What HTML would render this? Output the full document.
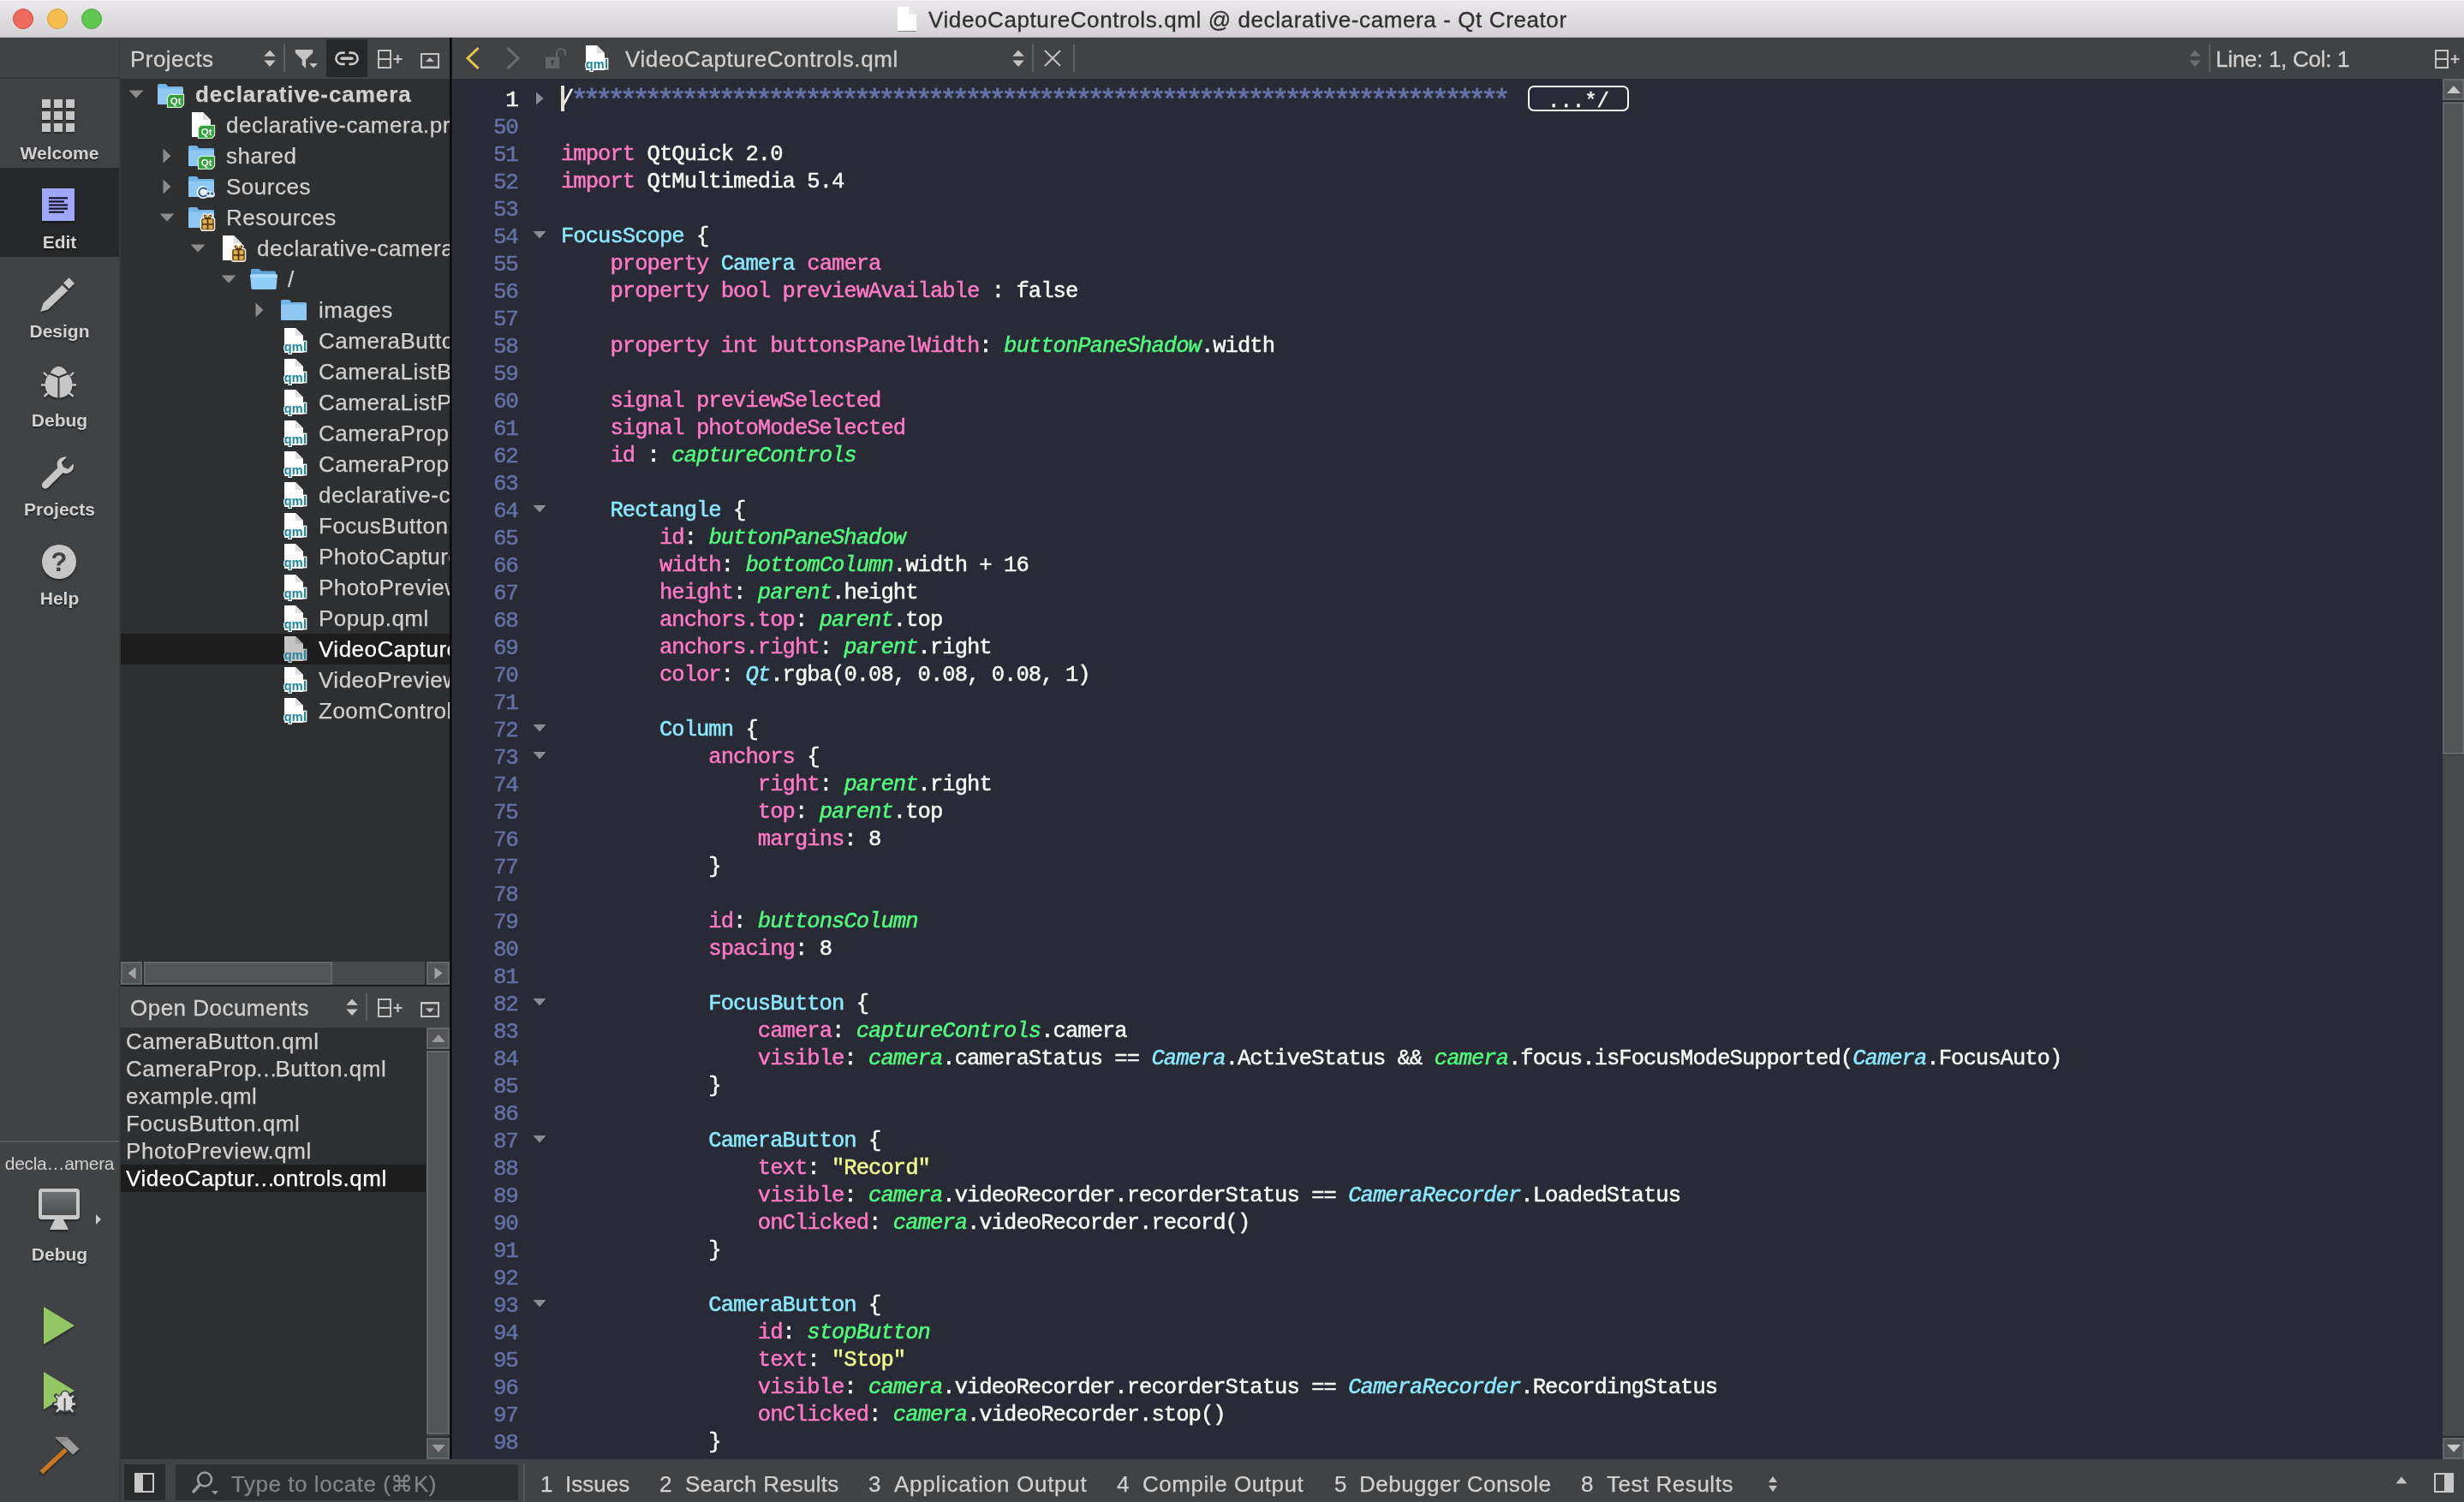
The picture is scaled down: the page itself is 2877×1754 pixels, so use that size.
<!DOCTYPE html>
<html lang="en"><head><meta charset="utf-8"><title>VideoCaptureControls.qml @ declarative-camera - Qt Creator</title>
<style>
*{box-sizing:border-box;margin:0;padding:0}
html,body{width:2877px;height:1754px;overflow:hidden;background:#404244}
body{will-change:transform;font-family:"Liberation Sans",sans-serif;font-size:26px;color:#d0d0d0;position:relative}
.abs{position:absolute}
#title{left:0;top:0;width:2877px;height:44px;background:linear-gradient(#ebe9eb,#d3d1d3);border-bottom:1px solid #b1afb1;box-shadow:inset 0 1px 0 #f4f3f4}
#title .tl{position:absolute;top:10px;width:24px;height:24px;border-radius:50%}
#title .txt{position:absolute;left:1084px;top:0;height:44px;line-height:46px;color:#2f2f2f;font-size:26px;white-space:nowrap;letter-spacing:.6px;-webkit-text-stroke:.3px #2f2f2f}
#side{left:0;top:44px;width:141px;height:1710px;background:#404244}
.mode{position:absolute;left:0;width:139px;height:104px}
.mode.sel{background:#262728}
.mode .lbl{position:absolute;left:0;width:139px;top:73px;text-align:center;font-weight:bold;font-size:21px;color:#d2d2d2;line-height:28px;letter-spacing:0;text-shadow:0 2px 2px rgba(0,0,0,.45)}
.mode svg{position:absolute}
#ptool,#etool,#otool{background:#404244}
.tree{background:#2e2f30}
.row{position:absolute;left:0;height:36px;line-height:36px;white-space:nowrap;font-size:26px;color:#d0d0d0}
.row .t{position:absolute;top:0;letter-spacing:.5px;-webkit-text-stroke:.25px currentColor}
.row svg{position:absolute}
.orow{position:absolute;left:0;width:357px;height:32px;line-height:32px;white-space:nowrap;font-size:26px;color:#d0d0d0;padding-left:7px;letter-spacing:.55px;-webkit-text-stroke:.25px currentColor}
.el{margin:0 -3px 0 -2px}
#editor{left:528px;top:92px;width:2324px;height:1612px;background:#282a36;overflow:hidden}
.ln{position:absolute;left:0;width:76.5px;text-align:right;height:32px;line-height:32px;color:#6272a4;font-family:"Liberation Mono",monospace;font-size:26px;letter-spacing:-1.4px;-webkit-text-stroke:.5px currentColor}
.cl{position:absolute;left:127px;height:32px;line-height:32px;white-space:pre;color:#f8f8f2;font-family:"Liberation Mono",monospace;font-size:25.5px;letter-spacing:-.94px;-webkit-text-stroke:.5px currentColor}
.st{display:inline-block;width:14.36px;font-size:34px;line-height:32px;vertical-align:top;position:relative;top:1px;left:-3px;-webkit-text-stroke:.9px currentColor}
.k{color:#ff79c6}.c{color:#8be9fd}.g{color:#50fa7b;font-style:italic}.ci{color:#8be9fd;font-style:italic}.s{color:#f1fa8c}.m{color:#6272a4}
.fold{position:absolute;left:94px}
#bottom{left:141px;top:1704px;width:2736px;height:50px;background:#404244}
#bottom>div.in{position:absolute;left:-1px;top:-1px;width:2737px;height:51px}
.bt{position:absolute;top:0;height:51px;line-height:60px;font-size:26px;color:#d0d0d0;white-space:nowrap;letter-spacing:.3px;-webkit-text-stroke:.25px currentColor}
</style></head>
<body>
<div id="title" class="abs">
<div class="tl" style="left:15px;background:#ee6a5e;border:1px solid #cf5046"></div>
<div class="tl" style="left:55px;background:#f5be4f;border:1px solid #d5a03c"></div>
<div class="tl" style="left:95px;background:#5fc650;border:1px solid #48a83b"></div>
<svg class="abs" style="left:1046px;top:7px" width="26" height="30" viewBox="0 0 26 30"><path d="M2 1h13l9 9v19H2z" fill="#ffffff" style="filter:drop-shadow(0 1px 0.6px rgba(0,0,0,.35))"/><path d="M15 1v9h9z" fill="#e9e9e9"/></svg>
<div class="txt">VideoCaptureControls.qml @ declarative-camera - Qt Creator</div>
</div>
<div id="side" class="abs">
<div class="mode" style="top:48px"><svg style="left:49px;top:24px;filter:drop-shadow(0 2px 1px rgba(0,0,0,.4))" width="38" height="38" fill="#c6c6c6"><rect x="0" y="0" width="10" height="10"/><rect x="14" y="0" width="10" height="10"/><rect x="28" y="0" width="10" height="10"/><rect x="0" y="14" width="10" height="10"/><rect x="14" y="14" width="10" height="10"/><rect x="28" y="14" width="10" height="10"/><rect x="0" y="28" width="10" height="10"/><rect x="14" y="28" width="10" height="10"/><rect x="28" y="28" width="10" height="10"/></svg><div class="lbl">Welcome</div></div>
<div class="mode sel" style="top:152px"><svg style="left:49px;top:24px;filter:drop-shadow(0 2px 1px rgba(0,0,0,.5))" width="38" height="38"><rect width="38" height="38" fill="#9fa7fb"/><rect x="8" y="10.2" width="22" height="2.2" fill="#15162a"/><rect x="8" y="14.3" width="18" height="2.2" fill="#15162a"/><rect x="8" y="18.4" width="22" height="2.2" fill="#15162a"/><rect x="8" y="22.5" width="22" height="2.2" fill="#15162a"/><rect x="8" y="26.6" width="18" height="2.2" fill="#15162a"/></svg><div class="lbl">Edit</div></div>
<div class="mode" style="top:256px"><svg style="left:45px;top:21px;filter:drop-shadow(0 2px 1px rgba(0,0,0,.4))" width="46" height="46" viewBox="0 0 46 46" fill="#c6c6c6"><path d="M2.3 42.9 L5.6 32.9 L27.6 12 L34.3 18.3 L11 40.5 Z"/><path d="M29 9.6 L35.6 3.2 L42 9.9 L35.6 16.3 Z"/></svg><div class="lbl">Design</div></div>
<div class="mode" style="top:360px"><svg style="left:46px;top:22px;filter:drop-shadow(0 2px 1px rgba(0,0,0,.4))" width="46" height="46" viewBox="0 0 46 46" fill="#c6c6c6" stroke="#c6c6c6"><path d="M13 9.5 C15 4 19.5 2 22.5 2 C25.5 2 30 4 32 9.5 L22.5 13.5 Z" stroke="none"/><path d="M21.5 15.2 L11.5 11.2 C8 14 6.5 19 6.5 23.5 C6.5 31 12 38 21.5 38.6 Z" stroke="none"/><path d="M23.5 15.2 L33.5 11.2 C37 14 38.5 19 38.5 23.5 C38.5 31 33 38 23.5 38.6 Z" stroke="none"/><g stroke-width="2.4" fill="none"><path d="M9 13 L5 9"/><path d="M36 13 L40 9"/><path d="M7 23.5 L2 23.5"/><path d="M38 23.5 L43 23.5"/><path d="M10 33 L5.5 37"/><path d="M35 33 L39.5 37"/></g></svg><div class="lbl">Debug</div></div>
<div class="mode" style="top:464px"><svg style="left:47px;top:24px;filter:drop-shadow(0 2px 1px rgba(0,0,0,.4))" width="42" height="42" viewBox="0 0 46 46" fill="#c6c6c6"><path d="M34 2 C28 0.5 21.5 4.5 21.5 11.5 C21.5 13 21.8 14.3 22.3 15.6 L3.6 34.3 C1.6 36.3 1.6 39.2 3.4 41 C5.2 42.8 8.1 42.8 10.1 40.8 L28.8 22.1 C30.1 22.6 31.4 22.9 32.9 22.9 C39.9 22.9 43.9 16.4 42.4 10.4 L35.6 17.2 L29.6 14.8 L27.2 8.8 Z"/></svg><div class="lbl">Projects</div></div>
<div class="mode" style="top:568px"><svg style="left:48px;top:23px;filter:drop-shadow(0 2px 1px rgba(0,0,0,.4))" width="42" height="42" viewBox="0 0 42 42"><circle cx="21" cy="21" r="20" fill="#c6c6c6"/><text x="21" y="31.5" text-anchor="middle" font-family="Liberation Sans, sans-serif" font-weight="bold" font-size="31" fill="#404244">?</text></svg><div class="lbl">Help</div></div>
<div class="abs" style="left:139px;top:0;width:2px;height:1710px;background:#37383a"></div>
<div class="abs" style="left:0;top:46px;width:139px;height:2px;background:#37383a"></div>
<div class="abs" style="left:0;top:1288px;width:139px;height:2px;background:#595b5d"></div>
<div class="abs" style="left:0;top:1300px;width:139px;text-align:center;font-size:21px;letter-spacing:-.3px;line-height:30px;color:#d0d0d0;white-space:nowrap">decla…amera</div>
<svg class="abs" style="left:43px;top:1342px;filter:drop-shadow(0 2px 1px rgba(0,0,0,.4))" width="52" height="52" viewBox="0 0 52 52"><defs><linearGradient id="scr" x1="0" y1="0" x2="0" y2="1"><stop offset="0" stop-color="#707173"/><stop offset="1" stop-color="#4c4d4f"/></linearGradient></defs><rect x="2" y="2" width="48" height="36" rx="4" fill="#c8c8c8"/><rect x="6" y="6" width="40" height="27" fill="url(#scr)"/><path d="M21 38 L31 38 L37 50 L15 50 Z" fill="#c8c8c8"/></svg>
<svg class="abs" style="left:111px;top:1373px" width="8" height="14"><path d="M1 1 L7 7 L1 13Z" fill="#c8c8c8"/></svg>
<div class="abs" style="left:0;top:1407px;width:139px;text-align:center;font-weight:bold;font-size:21px;line-height:28px;color:#d2d2d2;text-shadow:0 2px 2px rgba(0,0,0,.45)">Debug</div>
<svg class="abs" style="left:49px;top:1480px;filter:drop-shadow(0 2px 1px rgba(0,0,0,.4))" width="40" height="48" viewBox="0 0 40 48"><path d="M2 2 L38 24 L2 46 Z" fill="#93c763"/></svg>
<svg class="abs" style="left:49px;top:1556px;filter:drop-shadow(0 2px 1px rgba(0,0,0,.4))" width="44" height="52" viewBox="0 0 44 52"><path d="M2 2 L38 24 L2 46 Z" fill="#93c763"/><g stroke="#404244" stroke-width="3.2" fill="#404244" stroke-linejoin="round"><circle cx="27" cy="28.9" r="3.9"/><ellipse cx="26.6" cy="38.6" rx="9" ry="9.2"/><path d="M20 33.5 L16.5 30 M33.2 33.5 L36.7 30 M18.5 39.6 L14.3 39.6 M34.7 39.6 L39 39.6 M20.5 45 L17 48.5 M32.7 45 L36.2 48.5" stroke-width="5" stroke-linecap="round"/></g><g fill="#dadada"><circle cx="27" cy="28.9" r="3.9"/><path d="M25.7 30.6 L22 29.6 C19 31.5 17.6 35 17.6 38.8 C17.6 43.6 20.8 47.4 25.7 47.6 Z"/><path d="M27.5 30.6 L31.2 29.6 C34.2 31.5 35.6 35 35.6 38.8 C35.6 43.6 32.4 47.4 27.5 47.6 Z"/></g><path d="M20 33.5 L16.5 30 M33.2 33.5 L36.7 30 M18.5 39.6 L14.3 39.6 M34.7 39.6 L39 39.6 M20.5 45 L17 48.5 M32.7 45 L36.2 48.5" stroke="#dadada" stroke-width="2.2" fill="none"/></svg>
<svg class="abs" style="left:43px;top:1632px;filter:drop-shadow(0 2px 1px rgba(0,0,0,.45))" width="54" height="48" viewBox="0 0 54 48"><path d="M5.3 43.5 L34.1 16.8" stroke="#c8761f" stroke-width="5.2" fill="none"/><path d="M21.2 2.6 L35.1 2 L49.5 15.9 L42 22.8 Z" fill="#9c9c9c"/><path d="M21.2 2.6 L35.1 2 L38 4.8 L28.5 9.6 Z" fill="#8a8a8a"/></svg>
</div>
<div id="ptool" class="abs" style="left:140px;top:44px;width:385px;height:48px">
<div class="abs" style="left:12px;top:0;line-height:50px;font-size:26px;color:#d0d0d0;-webkit-text-stroke:.3px #d0d0d0;letter-spacing:.45px">Projects</div>
<svg class="abs" style="left:167px;top:12px" width="16" height="24"><path d="M8 2.5 L14.7 9.7 H1.3 Z" fill="#c4c4c4"/><path d="M8 21.9 L14.7 14.6 H1.3 Z" fill="#c4c4c4"/></svg>
<div class="abs" style="left:191px;top:8px;width:2px;height:32px;background:#5f6163"></div>
<svg class="abs" style="left:203px;top:12px" width="30" height="26" viewBox="0 0 30 26"><path d="M1.8 2 H22.2 V5.7 L14.1 13.7 V23.9 L9.8 19.7 V13.7 L1.8 5.7 Z" fill="#c4c4c4"/><path d="M18.2 18.1 H28 L23.1 23.3 Z" fill="#c4c4c4"/></svg>
<div class="abs" style="left:241px;top:2px;width:48px;height:44px;background:#262728"></div>
<svg class="abs" style="left:250px;top:14px" width="30" height="21" viewBox="0 0 30 21" fill="none" stroke="#c8c8c8" stroke-width="2.6"><path d="M12.7 3.6 H9 a6.65 6.65 0 0 0 0 13.3 H12.7"/><path d="M17.4 3.6 H21 a6.65 6.65 0 0 1 0 13.3 H17.4"/><path d="M9 10.25 H21" stroke-width="3.4" stroke-linecap="round"/></svg>
<svg class="abs" style="left:300px;top:13px" width="30" height="24" viewBox="0 0 30 24" fill="none" stroke="#c4c4c4" stroke-width="2"><rect x="2" y="2" width="14" height="20"/><path d="M2 12 H16"/><path d="M19.5 12 H29.5 M24.5 7 V17" stroke-width="2.2"/></svg>
<svg class="abs" style="left:350px;top:17px" width="24" height="20" viewBox="0 0 24 20"><rect x="2" y="2" width="20" height="16" fill="none" stroke="#c4c4c4" stroke-width="2"/><rect x="1" y="16.5" width="22" height="2.5" fill="#c4c4c4"/><path d="M7 11 H17 L12 6.3 Z" fill="#c4c4c4"/></svg>
</div>
<div class="abs tree" style="left:141px;top:92px;width:384px;height:1031px;overflow:hidden"><div class="abs" style="left:-1px;top:0;width:385px;height:1031px">
<div class="row" style="top:0px;width:385px;font-weight:bold;"><svg style="left:10px;top:13px" width="18" height="10"><path d="M0.5 0.5 H17.5 L9 9.5 Z" fill="#8c8c8c"/></svg><svg style="left:44px;top:2px" width="32" height="32" viewBox="0 0 32 32" ><path d="M0 5.5 Q0 4 1.5 4 H9 Q10 4 10.6 4.8 L12 7 H28.5 Q30 7 30 8.5 V26.5 Q30 28 28.5 28 H1.5 Q0 28 0 26.5 Z" fill="#72b5e6"/><path d="M0 9.5 H30 V26.5 Q30 28 28.5 28 H1.5 Q0 28 0 26.5 Z" fill="#8fc9f3"/><path d="M14.5 16.3 H30.5 V28 L27.5 31.3 H11.5 V19.6 Z" fill="#2fa03a" stroke="#cfe9d0" stroke-width="1.3"/><text x="21.2" y="28.3" text-anchor="middle" font-family="Liberation Sans, sans-serif" font-weight="bold" font-size="11.5" fill="#fff">Qt</text></svg><span class="t" style="left:88px;letter-spacing:.95px">declarative-camera</span></div>
<div class="row" style="top:36px;width:385px;"><svg style="left:80px;top:2px" width="32" height="32" viewBox="0 0 32 32" ><path d="M4 1 H17 L26 10 V30 H4 Z" fill="#fdfdfd"/><path d="M17 1 L26 10 H17 Z" fill="#dedede"/><path d="M14.5 16.3 H30.5 V28 L27.5 31.3 H11.5 V19.6 Z" fill="#2fa03a" stroke="#cfe9d0" stroke-width="1.3"/><text x="21.2" y="28.3" text-anchor="middle" font-family="Liberation Sans, sans-serif" font-weight="bold" font-size="11.5" fill="#fff">Qt</text></svg><span class="t" style="left:124px">declarative-camera.pro</span></div>
<div class="row" style="top:72px;width:385px;"><svg style="left:50px;top:9px" width="10" height="18"><path d="M0.5 0.5 V17.5 L9.5 9 Z" fill="#8c8c8c"/></svg><svg style="left:80px;top:2px" width="32" height="32" viewBox="0 0 32 32" ><path d="M0 5.5 Q0 4 1.5 4 H9 Q10 4 10.6 4.8 L12 7 H28.5 Q30 7 30 8.5 V26.5 Q30 28 28.5 28 H1.5 Q0 28 0 26.5 Z" fill="#72b5e6"/><path d="M0 9.5 H30 V26.5 Q30 28 28.5 28 H1.5 Q0 28 0 26.5 Z" fill="#8fc9f3"/><path d="M14.5 16.3 H30.5 V28 L27.5 31.3 H11.5 V19.6 Z" fill="#2fa03a" stroke="#cfe9d0" stroke-width="1.3"/><text x="21.2" y="28.3" text-anchor="middle" font-family="Liberation Sans, sans-serif" font-weight="bold" font-size="11.5" fill="#fff">Qt</text></svg><span class="t" style="left:124px">shared</span></div>
<div class="row" style="top:108px;width:385px;"><svg style="left:50px;top:9px" width="10" height="18"><path d="M0.5 0.5 V17.5 L9.5 9 Z" fill="#8c8c8c"/></svg><svg style="left:80px;top:2px" width="32" height="32" viewBox="0 0 32 32" ><path d="M0 5.5 Q0 4 1.5 4 H9 Q10 4 10.6 4.8 L12 7 H28.5 Q30 7 30 8.5 V26.5 Q30 28 28.5 28 H1.5 Q0 28 0 26.5 Z" fill="#72b5e6"/><path d="M0 9.5 H30 V26.5 Q30 28 28.5 28 H1.5 Q0 28 0 26.5 Z" fill="#8fc9f3"/><path d="M17 15 a7.5 7.5 0 1 0 0 15 q2.6 0 4.4 -1.6 h6.1 a3.4 3.4 0 0 0 0 -6.8 h-6.1 q0 -3 0 -5 q-1.8 -1.6 -4.4 -1.6 Z" fill="#eef6fd"/><path d="M21.2 19.3 a5 5 0 1 0 0 6.4" fill="none" stroke="#2d5c91" stroke-width="2"/><path d="M21.5 24 h3.6 M23.3 22.2 v3.6 M25.8 24 h3.6 M27.6 22.2 v3.6" stroke="#2d5c91" stroke-width="1.5" fill="none"/></svg><span class="t" style="left:124px">Sources</span></div>
<div class="row" style="top:144px;width:385px;"><svg style="left:46px;top:13px" width="18" height="10"><path d="M0.5 0.5 H17.5 L9 9.5 Z" fill="#8c8c8c"/></svg><svg style="left:80px;top:2px" width="32" height="32" viewBox="0 0 32 32" ><path d="M0 5.5 Q0 4 1.5 4 H9 Q10 4 10.6 4.8 L12 7 H28.5 Q30 7 30 8.5 V26.5 Q30 28 28.5 28 H1.5 Q0 28 0 26.5 Z" fill="#72b5e6"/><path d="M0 9.5 H30 V26.5 Q30 28 28.5 28 H1.5 Q0 28 0 26.5 Z" fill="#8fc9f3"/><path d="M18 16.5 q-2.5 -4.5 1.2 -4.7 q2.2 0 3.3 2.6 q1.1 -2.6 3.3 -2.6 q3.7 .2 1.2 4.7 h1.2 q2.3 0 2.3 2.3 v10 q0 2.3 -2.3 2.3 h-11.4 q-2.3 0 -2.3 -2.3 v-10 q0 -2.3 2.3 -2.3 Z" fill="#4f3110" stroke="#f3ead7" stroke-width="1.6"/><path d="M19.6 15.8 q-1.2 -2.4 .2 -2.5 q1.4 .1 2 2.5 Z M25.4 15.8 q1.2 -2.4 -.2 -2.5 q-1.4 .1 -2 2.5 Z" fill="#d9a93e"/><rect x="16.6" y="18.2" width="5" height="4.9" fill="#dcae45"/><rect x="23.4" y="18.2" width="5" height="4.9" fill="#dcae45"/><rect x="16.6" y="24.7" width="5" height="4.9" fill="#dcae45"/><rect x="23.4" y="24.7" width="5" height="4.9" fill="#dcae45"/></svg><span class="t" style="left:124px">Resources</span></div>
<div class="row" style="top:180px;width:385px;"><svg style="left:82px;top:13px" width="18" height="10"><path d="M0.5 0.5 H17.5 L9 9.5 Z" fill="#8c8c8c"/></svg><svg style="left:116px;top:2px" width="32" height="32" viewBox="0 0 32 32" ><path d="M4 1 H17 L26 10 V30 H4 Z" fill="#fdfdfd"/><path d="M17 1 L26 10 H17 Z" fill="#dedede"/><path d="M18 16.5 q-2.5 -4.5 1.2 -4.7 q2.2 0 3.3 2.6 q1.1 -2.6 3.3 -2.6 q3.7 .2 1.2 4.7 h1.2 q2.3 0 2.3 2.3 v10 q0 2.3 -2.3 2.3 h-11.4 q-2.3 0 -2.3 -2.3 v-10 q0 -2.3 2.3 -2.3 Z" fill="#4f3110" stroke="#f3ead7" stroke-width="1.6"/><path d="M19.6 15.8 q-1.2 -2.4 .2 -2.5 q1.4 .1 2 2.5 Z M25.4 15.8 q1.2 -2.4 -.2 -2.5 q-1.4 .1 -2 2.5 Z" fill="#d9a93e"/><rect x="16.6" y="18.2" width="5" height="4.9" fill="#dcae45"/><rect x="23.4" y="18.2" width="5" height="4.9" fill="#dcae45"/><rect x="16.6" y="24.7" width="5" height="4.9" fill="#dcae45"/><rect x="23.4" y="24.7" width="5" height="4.9" fill="#dcae45"/></svg><span class="t" style="left:160px">declarative-camera.qrc</span></div>
<div class="row" style="top:216px;width:385px;"><svg style="left:118px;top:13px" width="18" height="10"><path d="M0.5 0.5 H17.5 L9 9.5 Z" fill="#8c8c8c"/></svg><svg style="left:152px;top:2px" width="32" height="32" viewBox="0 0 32 32" ><path d="M1 5.5 Q1 4 2.5 4 H10 Q11 4 11.6 4.8 L13 6.5 H28.5 Q30 6.5 30 8 V24 H1 Z" fill="#5ea6da"/><path d="M0.2 12 Q0 10.2 1.8 10.2 H30.2 Q32 10.2 31.8 12 L30.6 26.4 Q30.4 28 28.8 28 H3.2 Q1.6 28 1.4 26.4 Z" fill="#8fcdf6"/><path d="M0.2 12 Q0 10.2 1.8 10.2 H30.2 Q32 10.2 31.8 12 L31.6 14 H0.4 Z" fill="#a9daf9"/></svg><span class="t" style="left:196px">/</span></div>
<div class="row" style="top:252px;width:385px;"><svg style="left:158px;top:9px" width="10" height="18"><path d="M0.5 0.5 V17.5 L9.5 9 Z" fill="#8c8c8c"/></svg><svg style="left:188px;top:2px" width="32" height="32" viewBox="0 0 32 32" ><path d="M0 5.5 Q0 4 1.5 4 H9 Q10 4 10.6 4.8 L12 7 H28.5 Q30 7 30 8.5 V26.5 Q30 28 28.5 28 H1.5 Q0 28 0 26.5 Z" fill="#72b5e6"/><path d="M0 9.5 H30 V26.5 Q30 28 28.5 28 H1.5 Q0 28 0 26.5 Z" fill="#8fc9f3"/></svg><span class="t" style="left:232px">images</span></div>
<div class="row" style="top:288px;width:385px;"><svg style="left:188px;top:2px" width="32" height="32" viewBox="0 0 32 32" ><path d="M4 1 H17 L26 10 V30 H4 Z" fill="#fdfdfd"/><path d="M17 1 L26 10 H17 Z" fill="#dedede"/><text x="17" y="28.4" text-anchor="middle" font-family="Liberation Sans, sans-serif" font-weight="bold" font-size="14.5" fill="#21889b" stroke="#fdfdfd" stroke-width="2.6" paint-order="stroke" letter-spacing=".3">qml</text></svg><span class="t" style="left:232px">CameraButton.qml</span></div>
<div class="row" style="top:324px;width:385px;"><svg style="left:188px;top:2px" width="32" height="32" viewBox="0 0 32 32" ><path d="M4 1 H17 L26 10 V30 H4 Z" fill="#fdfdfd"/><path d="M17 1 L26 10 H17 Z" fill="#dedede"/><text x="17" y="28.4" text-anchor="middle" font-family="Liberation Sans, sans-serif" font-weight="bold" font-size="14.5" fill="#21889b" stroke="#fdfdfd" stroke-width="2.6" paint-order="stroke" letter-spacing=".3">qml</text></svg><span class="t" style="left:232px">CameraListButton.qml</span></div>
<div class="row" style="top:360px;width:385px;"><svg style="left:188px;top:2px" width="32" height="32" viewBox="0 0 32 32" ><path d="M4 1 H17 L26 10 V30 H4 Z" fill="#fdfdfd"/><path d="M17 1 L26 10 H17 Z" fill="#dedede"/><text x="17" y="28.4" text-anchor="middle" font-family="Liberation Sans, sans-serif" font-weight="bold" font-size="14.5" fill="#21889b" stroke="#fdfdfd" stroke-width="2.6" paint-order="stroke" letter-spacing=".3">qml</text></svg><span class="t" style="left:232px">CameraListPopup.qml</span></div>
<div class="row" style="top:396px;width:385px;"><svg style="left:188px;top:2px" width="32" height="32" viewBox="0 0 32 32" ><path d="M4 1 H17 L26 10 V30 H4 Z" fill="#fdfdfd"/><path d="M17 1 L26 10 H17 Z" fill="#dedede"/><text x="17" y="28.4" text-anchor="middle" font-family="Liberation Sans, sans-serif" font-weight="bold" font-size="14.5" fill="#21889b" stroke="#fdfdfd" stroke-width="2.6" paint-order="stroke" letter-spacing=".3">qml</text></svg><span class="t" style="left:232px">CameraPropertyButton.qml</span></div>
<div class="row" style="top:432px;width:385px;"><svg style="left:188px;top:2px" width="32" height="32" viewBox="0 0 32 32" ><path d="M4 1 H17 L26 10 V30 H4 Z" fill="#fdfdfd"/><path d="M17 1 L26 10 H17 Z" fill="#dedede"/><text x="17" y="28.4" text-anchor="middle" font-family="Liberation Sans, sans-serif" font-weight="bold" font-size="14.5" fill="#21889b" stroke="#fdfdfd" stroke-width="2.6" paint-order="stroke" letter-spacing=".3">qml</text></svg><span class="t" style="left:232px">CameraPropertyPopup.qml</span></div>
<div class="row" style="top:468px;width:385px;"><svg style="left:188px;top:2px" width="32" height="32" viewBox="0 0 32 32" ><path d="M4 1 H17 L26 10 V30 H4 Z" fill="#fdfdfd"/><path d="M17 1 L26 10 H17 Z" fill="#dedede"/><text x="17" y="28.4" text-anchor="middle" font-family="Liberation Sans, sans-serif" font-weight="bold" font-size="14.5" fill="#21889b" stroke="#fdfdfd" stroke-width="2.6" paint-order="stroke" letter-spacing=".3">qml</text></svg><span class="t" style="left:232px">declarative-camera.qml</span></div>
<div class="row" style="top:504px;width:385px;"><svg style="left:188px;top:2px" width="32" height="32" viewBox="0 0 32 32" ><path d="M4 1 H17 L26 10 V30 H4 Z" fill="#fdfdfd"/><path d="M17 1 L26 10 H17 Z" fill="#dedede"/><text x="17" y="28.4" text-anchor="middle" font-family="Liberation Sans, sans-serif" font-weight="bold" font-size="14.5" fill="#21889b" stroke="#fdfdfd" stroke-width="2.6" paint-order="stroke" letter-spacing=".3">qml</text></svg><span class="t" style="left:232px">FocusButton.qml</span></div>
<div class="row" style="top:540px;width:385px;"><svg style="left:188px;top:2px" width="32" height="32" viewBox="0 0 32 32" ><path d="M4 1 H17 L26 10 V30 H4 Z" fill="#fdfdfd"/><path d="M17 1 L26 10 H17 Z" fill="#dedede"/><text x="17" y="28.4" text-anchor="middle" font-family="Liberation Sans, sans-serif" font-weight="bold" font-size="14.5" fill="#21889b" stroke="#fdfdfd" stroke-width="2.6" paint-order="stroke" letter-spacing=".3">qml</text></svg><span class="t" style="left:232px">PhotoCaptureControls.qml</span></div>
<div class="row" style="top:576px;width:385px;"><svg style="left:188px;top:2px" width="32" height="32" viewBox="0 0 32 32" ><path d="M4 1 H17 L26 10 V30 H4 Z" fill="#fdfdfd"/><path d="M17 1 L26 10 H17 Z" fill="#dedede"/><text x="17" y="28.4" text-anchor="middle" font-family="Liberation Sans, sans-serif" font-weight="bold" font-size="14.5" fill="#21889b" stroke="#fdfdfd" stroke-width="2.6" paint-order="stroke" letter-spacing=".3">qml</text></svg><span class="t" style="left:232px">PhotoPreview.qml</span></div>
<div class="row" style="top:612px;width:385px;"><svg style="left:188px;top:2px" width="32" height="32" viewBox="0 0 32 32" ><path d="M4 1 H17 L26 10 V30 H4 Z" fill="#fdfdfd"/><path d="M17 1 L26 10 H17 Z" fill="#dedede"/><text x="17" y="28.4" text-anchor="middle" font-family="Liberation Sans, sans-serif" font-weight="bold" font-size="14.5" fill="#21889b" stroke="#fdfdfd" stroke-width="2.6" paint-order="stroke" letter-spacing=".3">qml</text></svg><span class="t" style="left:232px">Popup.qml</span></div>
<div class="row" style="top:648px;width:385px;background:#1d1d1d;color:#fff;"><svg style="left:188px;top:2px" width="32" height="32" viewBox="0 0 32 32" ><path d="M4 1 H17 L26 10 V30 H4 Z" fill="#c4c4c4"/><path d="M17 1 L26 10 H17 Z" fill="#a9a9a9"/><text x="17" y="28.4" text-anchor="middle" font-family="Liberation Sans, sans-serif" font-weight="bold" font-size="14.5" fill="#21889b" stroke="#c4c4c4" stroke-width="2.6" paint-order="stroke" letter-spacing=".3">qml</text></svg><span class="t" style="left:232px">VideoCaptureControls.qml</span></div>
<div class="row" style="top:684px;width:385px;"><svg style="left:188px;top:2px" width="32" height="32" viewBox="0 0 32 32" ><path d="M4 1 H17 L26 10 V30 H4 Z" fill="#fdfdfd"/><path d="M17 1 L26 10 H17 Z" fill="#dedede"/><text x="17" y="28.4" text-anchor="middle" font-family="Liberation Sans, sans-serif" font-weight="bold" font-size="14.5" fill="#21889b" stroke="#fdfdfd" stroke-width="2.6" paint-order="stroke" letter-spacing=".3">qml</text></svg><span class="t" style="left:232px">VideoPreview.qml</span></div>
<div class="row" style="top:720px;width:385px;"><svg style="left:188px;top:2px" width="32" height="32" viewBox="0 0 32 32" ><path d="M4 1 H17 L26 10 V30 H4 Z" fill="#fdfdfd"/><path d="M17 1 L26 10 H17 Z" fill="#dedede"/><text x="17" y="28.4" text-anchor="middle" font-family="Liberation Sans, sans-serif" font-weight="bold" font-size="14.5" fill="#21889b" stroke="#fdfdfd" stroke-width="2.6" paint-order="stroke" letter-spacing=".3">qml</text></svg><span class="t" style="left:232px">ZoomControl.qml</span></div>
</div></div>
<div class="abs" style="left:141px;top:1123px;width:384px;height:27px;background:#47494a"><div class="abs" style="left:0px;top:0px;width:25px;height:27px;background:#535456;border:2px solid #656669"></div><svg class="abs" style="left:8px;top:6px" width="10" height="15"><path d="M9.5 0.5 V14.5 L0.5 7.5 Z" fill="#a2a2a2"/></svg><div class="abs" style="left:25px;top:0;width:2px;height:27px;background:#2b2c2d"></div><div class="abs" style="left:27px;top:0px;width:220px;height:27px;background:#535456;border:2px solid #656669"></div><div class="abs" style="left:355px;top:0;width:2px;height:27px;background:#2b2c2d"></div><div class="abs" style="left:357px;top:0px;width:27px;height:27px;background:#535456;border:2px solid #656669"></div><svg class="abs" style="left:366px;top:6px" width="10" height="15"><path d="M0.5 0.5 V14.5 L9.5 7.5 Z" fill="#a2a2a2"/></svg></div>
<div class="abs" style="left:141px;top:1150px;width:384px;height:2px;background:#1a1b1c"></div>
<div id="otool" class="abs" style="left:140px;top:1152px;width:385px;height:48px">
<div class="abs" style="left:12px;top:0;line-height:50px;font-size:26px;color:#d0d0d0;-webkit-text-stroke:.3px #d0d0d0;letter-spacing:.48px">Open Documents</div>
<svg class="abs" style="left:263px;top:12px" width="16" height="24"><path d="M8 2.5 L14.7 9.7 H1.3 Z" fill="#c4c4c4"/><path d="M8 21.9 L14.7 14.6 H1.3 Z" fill="#c4c4c4"/></svg>
<div class="abs" style="left:287px;top:8px;width:2px;height:32px;background:#5f6163"></div>
<svg class="abs" style="left:300px;top:13px" width="30" height="24" viewBox="0 0 30 24" fill="none" stroke="#c4c4c4" stroke-width="2"><rect x="2" y="2" width="14" height="20"/><path d="M2 12 H16"/><path d="M19.5 12 H29.5 M24.5 7 V17" stroke-width="2.2"/></svg>
<svg class="abs" style="left:350px;top:17px" width="24" height="20" viewBox="0 0 24 20"><rect x="2" y="2" width="20" height="16" fill="none" stroke="#c4c4c4" stroke-width="2"/><rect x="1" y="1" width="22" height="2.5" fill="#c4c4c4"/><path d="M7 8.5 H17 L12 13.4 Z" fill="#c4c4c4"/></svg>
</div>
<div class="abs tree" style="left:141px;top:1200px;width:384px;height:504px;overflow:hidden"><div class="abs" style="left:-1px;top:0;width:385px;height:504px">
<div class="orow" style="top:0px;">CameraButton.qml</div>
<div class="orow" style="top:32px;">CameraProp<span class="el">…</span>Button.qml</div>
<div class="orow" style="top:64px;">example.qml</div>
<div class="orow" style="top:96px;">FocusButton.qml</div>
<div class="orow" style="top:128px;">PhotoPreview.qml</div>
<div class="orow" style="top:160px;background:#1d1d1d;color:#fff;">VideoCaptur<span class="el">…</span>ontrols.qml</div>
<div class="abs" style="left:358px;top:0px;width:27px;height:504px;background:#47494a"><div class="abs" style="left:0px;top:0px;width:27px;height:25px;background:#535456;border:2px solid #656669"></div><svg class="abs" style="left:5.5px;top:8px" width="16" height="9"><path d="M0 9 H16 L8.0 0.3 Z" fill="#9a9a9a"/></svg><div class="abs" style="left:0;top:25px;width:27px;height:2px;background:#2b2c2d"></div><div class="abs" style="left:0px;top:27px;width:27px;height:448px;background:#535456;border:2px solid #656669"></div><div class="abs" style="left:0;top:475px;width:27px;height:1px;background:#333435"></div><div class="abs" style="left:0;top:477px;width:27px;height:2px;background:#2b2c2d"></div><div class="abs" style="left:0px;top:479px;width:27px;height:25px;background:#535456;border:2px solid #656669"></div><svg class="abs" style="left:5.5px;top:487px" width="16" height="9"><path d="M0 0 H16 L8.0 8.7 Z" fill="#9a9a9a"/></svg></div>
</div></div>
<div class="abs" style="left:525px;top:44px;width:3px;height:1660px;background:#0a0a0b;border-right:1px solid #1b1c22"></div>
<div id="etool" class="abs" style="left:528px;top:44px;width:2349px;height:48px">
<svg class="abs" style="left:15px;top:10px" width="18" height="28" viewBox="0 0 18 28" fill="none" stroke="#e8c547" stroke-width="3"><path d="M15.5 2 L3 14 L15.5 26"/></svg>
<svg class="abs" style="left:62px;top:10px" width="18" height="28" viewBox="0 0 18 28" fill="none" stroke="#6a6c6e" stroke-width="3"><path d="M2.5 2 L15 14 L2.5 26"/></svg>
<svg class="abs" style="left:106px;top:10px" width="30" height="30" viewBox="0 0 30 30"><rect x="3" y="12.5" width="16" height="13.5" fill="#626466"/><path d="M16 12.5 V8 a5 5 0 0 1 10 0 V11" fill="none" stroke="#626466" stroke-width="2.2"/><circle cx="11" cy="18" r="2" fill="#404244"/><rect x="10.1" y="18.5" width="1.8" height="4" fill="#404244"/></svg>
<div class="abs" style="left:152px;top:8px;width:32px;height:32px"><svg style="left:0px;top:0px" width="32" height="32" viewBox="0 0 32 32" class="abs"><path d="M4 1 H17 L26 10 V30 H4 Z" fill="#fdfdfd"/><path d="M17 1 L26 10 H17 Z" fill="#dedede"/><text x="17" y="28.4" text-anchor="middle" font-family="Liberation Sans, sans-serif" font-weight="bold" font-size="14.5" fill="#21889b" stroke="#fdfdfd" stroke-width="2.6" paint-order="stroke" letter-spacing=".3">qml</text></svg></div>
<div class="abs" style="left:202px;top:0;line-height:50px;font-size:26px;color:#d0d0d0;-webkit-text-stroke:.3px #d0d0d0;letter-spacing:.6px;white-space:nowrap">VideoCaptureControls.qml</div>
<svg class="abs" style="left:653px;top:12px" width="16" height="24"><path d="M8 2.5 L14.7 9.7 H1.3 Z" fill="#c4c4c4"/><path d="M8 21.9 L14.7 14.6 H1.3 Z" fill="#c4c4c4"/></svg>
<div class="abs" style="left:677px;top:8px;width:2px;height:32px;background:#5f6163"></div>
<svg class="abs" style="left:690px;top:13px" width="22" height="22" fill="none" stroke="#c4c4c4" stroke-width="2"><path d="M2 2 L20 20 M20 2 L2 20"/></svg>
<div class="abs" style="left:725px;top:8px;width:2px;height:32px;background:#5f6163"></div>
<svg class="abs" style="left:2027px;top:12px" width="16" height="24"><path d="M8 2.5 L14.7 9.7 H1.3 Z" fill="#6a6c6e"/><path d="M8 21.9 L14.7 14.6 H1.3 Z" fill="#6a6c6e"/></svg>
<div class="abs" style="left:2051px;top:8px;width:2px;height:32px;background:#5f6163"></div>
<div class="abs" style="left:2059px;top:0;line-height:50px;font-size:26px;color:#d0d0d0;-webkit-text-stroke:.3px #d0d0d0;letter-spacing:-.28px;white-space:nowrap">Line: 1, Col: 1</div>
<svg class="abs" style="left:2314px;top:13px" width="30" height="24" viewBox="0 0 30 24" fill="none" stroke="#c4c4c4" stroke-width="2"><rect x="2" y="2" width="14" height="20"/><path d="M2 12 H16"/><path d="M19.5 12 H29.5 M24.5 7 V17" stroke-width="2.2"/></svg>
</div>
<div id="editor" class="abs">
<div class="ln" style="top:9px;color:#f8f8f2;">1</div>
<svg class="fold" style="top:15px;left:97px" width="10" height="16"><path d="M1 0.5 V15.5 L9.5 8 Z" fill="#8b8d94"/></svg>
<div class="cl" style="top:9px">/<span class="m"><span class="st">*</span><span class="st">*</span><span class="st">*</span><span class="st">*</span><span class="st">*</span><span class="st">*</span><span class="st">*</span><span class="st">*</span><span class="st">*</span><span class="st">*</span><span class="st">*</span><span class="st">*</span><span class="st">*</span><span class="st">*</span><span class="st">*</span><span class="st">*</span><span class="st">*</span><span class="st">*</span><span class="st">*</span><span class="st">*</span><span class="st">*</span><span class="st">*</span><span class="st">*</span><span class="st">*</span><span class="st">*</span><span class="st">*</span><span class="st">*</span><span class="st">*</span><span class="st">*</span><span class="st">*</span><span class="st">*</span><span class="st">*</span><span class="st">*</span><span class="st">*</span><span class="st">*</span><span class="st">*</span><span class="st">*</span><span class="st">*</span><span class="st">*</span><span class="st">*</span><span class="st">*</span><span class="st">*</span><span class="st">*</span><span class="st">*</span><span class="st">*</span><span class="st">*</span><span class="st">*</span><span class="st">*</span><span class="st">*</span><span class="st">*</span><span class="st">*</span><span class="st">*</span><span class="st">*</span><span class="st">*</span><span class="st">*</span><span class="st">*</span><span class="st">*</span><span class="st">*</span><span class="st">*</span><span class="st">*</span><span class="st">*</span><span class="st">*</span><span class="st">*</span><span class="st">*</span><span class="st">*</span><span class="st">*</span><span class="st">*</span><span class="st">*</span><span class="st">*</span><span class="st">*</span><span class="st">*</span><span class="st">*</span><span class="st">*</span><span class="st">*</span><span class="st">*</span><span class="st">*</span></span></div>
<div class="ln" style="top:41px;">50</div>
<div class="ln" style="top:73px;">51</div>
<div class="cl" style="top:73px"><span class="k">import</span> QtQuick 2.0</div>
<div class="ln" style="top:105px;">52</div>
<div class="cl" style="top:105px"><span class="k">import</span> QtMultimedia 5.4</div>
<div class="ln" style="top:137px;">53</div>
<div class="ln" style="top:169px;">54</div>
<svg class="fold" style="top:177px" width="16" height="10"><path d="M0.5 1 H15.5 L8 9.5 Z" fill="#8b8d94"/></svg>
<div class="cl" style="top:169px"><span class="c">FocusScope</span> {</div>
<div class="ln" style="top:201px;">55</div>
<div class="cl" style="top:201px">    <span class="k">property</span> <span class="c">Camera</span> <span class="k">camera</span></div>
<div class="ln" style="top:233px;">56</div>
<div class="cl" style="top:233px">    <span class="k">property bool previewAvailable</span> : false</div>
<div class="ln" style="top:265px;">57</div>
<div class="ln" style="top:297px;">58</div>
<div class="cl" style="top:297px">    <span class="k">property int buttonsPanelWidth</span>: <span class="g">buttonPaneShadow</span>.width</div>
<div class="ln" style="top:329px;">59</div>
<div class="ln" style="top:361px;">60</div>
<div class="cl" style="top:361px">    <span class="k">signal previewSelected</span></div>
<div class="ln" style="top:393px;">61</div>
<div class="cl" style="top:393px">    <span class="k">signal photoModeSelected</span></div>
<div class="ln" style="top:425px;">62</div>
<div class="cl" style="top:425px">    <span class="k">id</span> : <span class="g">captureControls</span></div>
<div class="ln" style="top:457px;">63</div>
<div class="ln" style="top:489px;">64</div>
<svg class="fold" style="top:497px" width="16" height="10"><path d="M0.5 1 H15.5 L8 9.5 Z" fill="#8b8d94"/></svg>
<div class="cl" style="top:489px">    <span class="c">Rectangle</span> {</div>
<div class="ln" style="top:521px;">65</div>
<div class="cl" style="top:521px">        <span class="k">id</span>: <span class="g">buttonPaneShadow</span></div>
<div class="ln" style="top:553px;">66</div>
<div class="cl" style="top:553px">        <span class="k">width</span>: <span class="g">bottomColumn</span>.width + 16</div>
<div class="ln" style="top:585px;">67</div>
<div class="cl" style="top:585px">        <span class="k">height</span>: <span class="g">parent</span>.height</div>
<div class="ln" style="top:617px;">68</div>
<div class="cl" style="top:617px">        <span class="k">anchors.top</span>: <span class="g">parent</span>.top</div>
<div class="ln" style="top:649px;">69</div>
<div class="cl" style="top:649px">        <span class="k">anchors.right</span>: <span class="g">parent</span>.right</div>
<div class="ln" style="top:681px;">70</div>
<div class="cl" style="top:681px">        <span class="k">color</span>: <span class="ci">Qt</span>.rgba(0.08, 0.08, 0.08, 1)</div>
<div class="ln" style="top:713px;">71</div>
<div class="ln" style="top:745px;">72</div>
<svg class="fold" style="top:753px" width="16" height="10"><path d="M0.5 1 H15.5 L8 9.5 Z" fill="#8b8d94"/></svg>
<div class="cl" style="top:745px">        <span class="c">Column</span> {</div>
<div class="ln" style="top:777px;">73</div>
<svg class="fold" style="top:785px" width="16" height="10"><path d="M0.5 1 H15.5 L8 9.5 Z" fill="#8b8d94"/></svg>
<div class="cl" style="top:777px">            <span class="k">anchors</span> {</div>
<div class="ln" style="top:809px;">74</div>
<div class="cl" style="top:809px">                <span class="k">right</span>: <span class="g">parent</span>.right</div>
<div class="ln" style="top:841px;">75</div>
<div class="cl" style="top:841px">                <span class="k">top</span>: <span class="g">parent</span>.top</div>
<div class="ln" style="top:873px;">76</div>
<div class="cl" style="top:873px">                <span class="k">margins</span>: 8</div>
<div class="ln" style="top:905px;">77</div>
<div class="cl" style="top:905px">            }</div>
<div class="ln" style="top:937px;">78</div>
<div class="ln" style="top:969px;">79</div>
<div class="cl" style="top:969px">            <span class="k">id</span>: <span class="g">buttonsColumn</span></div>
<div class="ln" style="top:1001px;">80</div>
<div class="cl" style="top:1001px">            <span class="k">spacing</span>: 8</div>
<div class="ln" style="top:1033px;">81</div>
<div class="ln" style="top:1065px;">82</div>
<svg class="fold" style="top:1073px" width="16" height="10"><path d="M0.5 1 H15.5 L8 9.5 Z" fill="#8b8d94"/></svg>
<div class="cl" style="top:1065px">            <span class="c">FocusButton</span> {</div>
<div class="ln" style="top:1097px;">83</div>
<div class="cl" style="top:1097px">                <span class="k">camera</span>: <span class="g">captureControls</span>.camera</div>
<div class="ln" style="top:1129px;">84</div>
<div class="cl" style="top:1129px">                <span class="k">visible</span>: <span class="g">camera</span>.cameraStatus == <span class="ci">Camera</span>.ActiveStatus &amp;&amp; <span class="g">camera</span>.focus.isFocusModeSupported(<span class="ci">Camera</span>.FocusAuto)</div>
<div class="ln" style="top:1161px;">85</div>
<div class="cl" style="top:1161px">            }</div>
<div class="ln" style="top:1193px;">86</div>
<div class="ln" style="top:1225px;">87</div>
<svg class="fold" style="top:1233px" width="16" height="10"><path d="M0.5 1 H15.5 L8 9.5 Z" fill="#8b8d94"/></svg>
<div class="cl" style="top:1225px">            <span class="c">CameraButton</span> {</div>
<div class="ln" style="top:1257px;">88</div>
<div class="cl" style="top:1257px">                <span class="k">text</span>: <span class="s">"Record"</span></div>
<div class="ln" style="top:1289px;">89</div>
<div class="cl" style="top:1289px">                <span class="k">visible</span>: <span class="g">camera</span>.videoRecorder.recorderStatus == <span class="ci">CameraRecorder</span>.LoadedStatus</div>
<div class="ln" style="top:1321px;">90</div>
<div class="cl" style="top:1321px">                <span class="k">onClicked</span>: <span class="g">camera</span>.videoRecorder.record()</div>
<div class="ln" style="top:1353px;">91</div>
<div class="cl" style="top:1353px">            }</div>
<div class="ln" style="top:1385px;">92</div>
<div class="ln" style="top:1417px;">93</div>
<svg class="fold" style="top:1425px" width="16" height="10"><path d="M0.5 1 H15.5 L8 9.5 Z" fill="#8b8d94"/></svg>
<div class="cl" style="top:1417px">            <span class="c">CameraButton</span> {</div>
<div class="ln" style="top:1449px;">94</div>
<div class="cl" style="top:1449px">                <span class="k">id</span>: <span class="g">stopButton</span></div>
<div class="ln" style="top:1481px;">95</div>
<div class="cl" style="top:1481px">                <span class="k">text</span>: <span class="s">"Stop"</span></div>
<div class="ln" style="top:1513px;">96</div>
<div class="cl" style="top:1513px">                <span class="k">visible</span>: <span class="g">camera</span>.videoRecorder.recorderStatus == <span class="ci">CameraRecorder</span>.RecordingStatus</div>
<div class="ln" style="top:1545px;">97</div>
<div class="cl" style="top:1545px">                <span class="k">onClicked</span>: <span class="g">camera</span>.videoRecorder.stop()</div>
<div class="ln" style="top:1577px;">98</div>
<div class="cl" style="top:1577px">            }</div>
<div class="abs" style="left:127px;top:8px;width:4px;height:30px;background:#e4dfd2"></div>
<div class="abs" style="left:1256px;top:8px;width:118px;height:30px;border:2px solid #f8f8f2;border-radius:7px;font-family:'Liberation Mono',monospace;font-size:24px;line-height:33px;color:#f8f8f2;text-align:center;white-space:pre;-webkit-text-stroke:.4px #f8f8f2">...*/</div>
</div>
<div class="abs" style="left:2852px;top:92px;width:25px;height:1612px;background:#47494a"><div class="abs" style="left:0px;top:0px;width:25px;height:25px;background:#535456;border:2px solid #656669"></div><svg class="abs" style="left:4.5px;top:8px" width="16" height="9"><path d="M0 9 H16 L8.0 0.3 Z" fill="#c8c8c8"/></svg><div class="abs" style="left:0;top:25px;width:25px;height:2px;background:#2b2c2d"></div><div class="abs" style="left:0px;top:27px;width:25px;height:762px;background:#535456;border:2px solid #656669"></div><div class="abs" style="left:0;top:789px;width:25px;height:1px;background:#333435"></div><div class="abs" style="left:0;top:1585px;width:25px;height:2px;background:#2b2c2d"></div><div class="abs" style="left:0px;top:1587px;width:25px;height:25px;background:#535456;border:2px solid #656669"></div><svg class="abs" style="left:4.5px;top:1595px" width="16" height="9"><path d="M0 0 H16 L8.0 8.7 Z" fill="#c8c8c8"/></svg></div>
<div id="bottom" class="abs"><div class="in">
<div class="abs" style="left:5px;top:7px;width:48px;height:42px;background:#2a2b2c"></div>
<svg class="abs" style="left:17px;top:17px" width="23" height="23"><rect x="1" y="1" width="21" height="21" fill="none" stroke="#c8c8c8" stroke-width="2"/><rect x="1" y="1" width="9" height="21" fill="#c8c8c8"/></svg>
<div class="abs" style="left:65px;top:7px;width:400px;height:42px;background:#2e2f30"></div>
<svg class="abs" style="left:83px;top:14px" width="34" height="30" viewBox="0 0 34 30" fill="none" stroke="#9a9b9c" stroke-width="2.6"><circle cx="16" cy="10.5" r="8"/><path d="M10.5 16.5 L2 26" stroke-width="3.4"/><path d="M24 24 H32 L28 28.5 Z" fill="#9a9b9c" stroke="none"/></svg>
<div class="bt" style="left:130px;color:#838485;letter-spacing:.54px">Type to locate (⌘K)</div>
<div class="abs" style="left:471px;top:6px;width:2px;height:45px;background:#56585a"></div>
<div class="bt" style="left:491px;letter-spacing:0">1</div>
<div class="bt" style="left:520px;letter-spacing:0px">Issues</div>
<div class="bt" style="left:630px;letter-spacing:0">2</div>
<div class="bt" style="left:660px;letter-spacing:0.22px">Search Results</div>
<div class="bt" style="left:874px;letter-spacing:0">3</div>
<div class="bt" style="left:904px;letter-spacing:0.72px">Application Output</div>
<div class="bt" style="left:1164px;letter-spacing:0">4</div>
<div class="bt" style="left:1194px;letter-spacing:0.54px">Compile Output</div>
<div class="bt" style="left:1418px;letter-spacing:0">5</div>
<div class="bt" style="left:1447px;letter-spacing:0.48px">Debugger Console</div>
<div class="bt" style="left:1706px;letter-spacing:0">8</div>
<div class="bt" style="left:1736px;letter-spacing:0.53px">Test Results</div>
<svg class="abs" style="left:1924px;top:20px" width="12" height="20"><path d="M6 1 L11 8 H1 Z" fill="#c4c4c4"/><path d="M6 19 L11 12 H1 Z" fill="#c4c4c4"/></svg>
<svg class="abs" style="left:2657px;top:21px" width="14" height="9"><path d="M0.5 8.5 H13.5 L7 0.5 Z" fill="#c4c4c4"/></svg>
<svg class="abs" style="left:2702px;top:17px" width="23" height="23"><rect x="1" y="1" width="21" height="21" fill="none" stroke="#c8c8c8" stroke-width="2"/><rect x="12" y="1" width="10" height="21" fill="#c8c8c8"/></svg>
</div></div>
</body></html>
